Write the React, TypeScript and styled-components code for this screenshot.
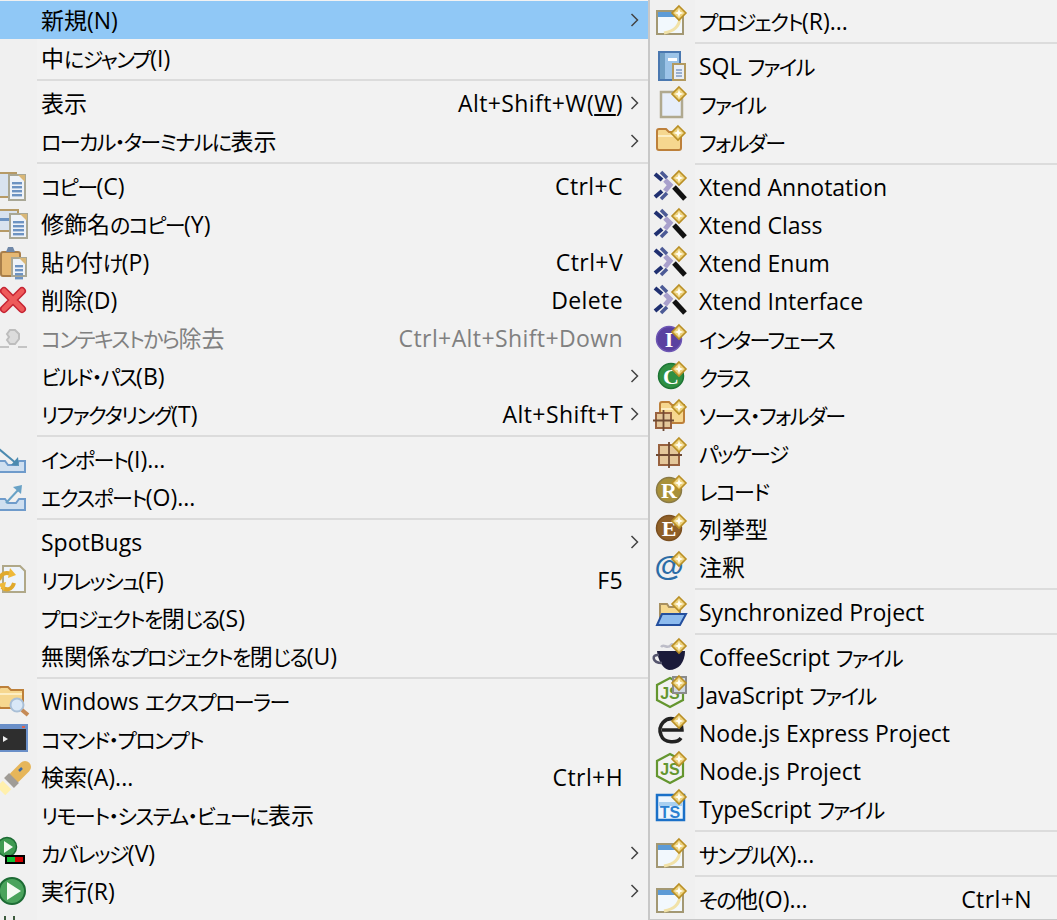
import React from "react";
import styled, { createGlobalStyle } from "styled-components";

const GlobalStyle = createGlobalStyle`
  html, body {
    margin: 0;
    padding: 0;
    background: #f2f2f2;
  }
`;

const Page = styled.div`
  width: 1057px;
  height: 920px;
  display: flex;
  overflow: hidden;
  color: #000;
  font-family: "Open Sans", "Noto Sans CJK JP", sans-serif;
  font-size: 23px;
  font-feature-settings: "palt";
`;

const Menu = styled.ul<{ $gutter: number; $top: number }>`
  list-style: none;
  margin: 0;
  padding: ${(p) => p.$top}px 0 0;
  background: linear-gradient(
    to right,
    #f0f0f0 ${(p) => p.$gutter}px,
    #f2f2f2 ${(p) => p.$gutter}px
  );
`;

const MainMenu = styled(Menu)`
  width: 650px;
  margin-left: -2px;
  flex-shrink: 0;
`;

const SubMenu = styled(Menu)`
  flex: 1;
  height: 920px;
  box-sizing: border-box;
  border-left: 2px solid #c8c8c8;
  border-bottom: 1px solid #c8c8c8;
`;

const Row = styled.li<{ $selected?: boolean; $disabled?: boolean }>`
  display: flex;
  align-items: center;
  height: 38px;
  line-height: 38px;
  white-space: nowrap;
  background: ${(p) => (p.$selected ? "#90c8f6" : "transparent")};
  color: ${(p) => (p.$disabled ? "#808080" : "#000")};
`;

const Gutter = styled.span<{ $width: number; $inset: number }>`
  width: ${(p) => p.$width}px;
  height: 30px;
  padding-left: ${(p) => p.$inset}px;
  box-sizing: border-box;
  flex-shrink: 0;
  display: flex;
  align-items: center;
`;

const Label = styled.span`
  flex: 1;
  height: 38px;
  padding-left: 4px;
`;

// かなは漢字より細く詰まって見えるので別に指定する
const Kana = styled.span`
  font-size: 21px;
  letter-spacing: -1.6px;
`;

const Shortcut = styled.span<{ $disabled?: boolean }>`
  height: 38px;
  letter-spacing: 0.4px;
  color: ${(p) => (p.$disabled ? "#808080" : "#000")};
`;

const ArrowCell = styled.span`
  width: 25px;
  flex-shrink: 0;
  display: flex;
  align-items: center;
  padding-left: 7px;
  box-sizing: border-box;
`;

const Separator = styled.li<{ $gutter: number }>`
  height: 7px;
  box-sizing: border-box;
  padding-top: 2px;
  margin-left: ${(p) => p.$gutter}px;

  &::before {
    content: "";
    display: block;
    height: 2px;
    background: #dcdcdc;
  }
`;

const Svg = styled.svg`
  width: 30px;
  height: 30px;
  overflow: visible;
  flex-shrink: 0;
`;

const withKana = (text: string) =>
  text.split(/([\u3040-\u30ff]+)/).map((part, i) =>
    /[\u3040-\u30ff]/.test(part) ? <Kana key={i}>{part}</Kana> : part
  );

const Chevron = () => (
  <svg width="9" height="14" viewBox="0 0 9 14">
    <path d="M1.5 1 L7.5 7 L1.5 13" fill="none" stroke="#444" strokeWidth="1.5" />
  </svg>
);

// 新規ウィザードの金色のひし形
const Spark = ({ x = 23, y = 7 }: { x?: number; y?: number }) => (
  <g transform={`translate(${x} ${y})`}>
    <path d="M0 -7 L7 0 L0 7 L-7 0 Z" fill="#ecd17c" stroke="#b98f25" strokeWidth="1.6" />
    <path d="M0 -4.5 L1.2 -1.2 L4.5 0 L1.2 1.2 L0 4.5 L-1.2 1.2 L-4.5 0 L-1.2 -1.2 Z" fill="#fffdf0" />
  </g>
);

const Sheet = ({ x, y, w, h }: { x: number; y: number; w: number; h: number }) => (
  <g>
    <rect x={x} y={y} width={w} height={h} fill="#eef2f8" stroke="#a9a795" strokeWidth="2" />
    <path d={`M${x + w - 7} ${y} h7 v7 Z`} fill="#d9b777" />
    {[7, 11, 15, 19].map((d) => (
      <rect key={d} x={x + 3} y={y + d} width={w - 6} height="2.4" fill="#6d93c2" />
    ))}
  </g>
);

const Round = ({ cx = 13, cy = 14, fill, edge, label }: { cx?: number; cy?: number; fill: string; edge: string; label: string }) => (
  <g>
    <circle cx={cx} cy={cy} r="12.5" fill={fill} stroke={edge} strokeWidth="1.5" />
    <text x={cx} y={cy + 7.5} textAnchor="middle" fontFamily="Liberation Serif, serif" fontWeight="700" fontSize="22" fill="#fff">
      {label}
    </text>
  </g>
);

const WizardWindow = () => (
  <g>
    <rect x="1" y="5" width="26" height="23" fill="#f2f8fd" stroke="#a39873" strokeWidth="2" />
    <rect x="2" y="6" width="24" height="5" fill="#5d9bd6" />
    <path d="M24 12 C23 21 18 25 8 27" fill="none" stroke="#f1e2a8" strokeWidth="3" />
  </g>
);

const FolderShape = ({ y = 0 }: { y?: number }) => (
  <g transform={`translate(0 ${y})`}>
    <path d="M1 4 Q1 2 3 2 H10 L13 5 H25 V21 Q25 23 23 23 H3 Q1 23 1 21 Z" fill="#f6d78f" stroke="#bd803a" strokeWidth="2" />
    <rect x="2" y="8" width="22" height="2" fill="#fdeec4" />
  </g>
);

const XtendMark = () => (
  <g fill="none">
    <path d="M9 8 L14 13 L9 19" stroke="#a8a0cc" strokeWidth="5" />
    <path d="M5 0 L11 6" stroke="#4c5a96" strokeWidth="3.5" />
    <path d="M-1 2 L6 8" stroke="#1f2f70" strokeWidth="4" />
    <path d="M-1 25 L6 19" stroke="#1f2f70" strokeWidth="4" />
    <path d="M5 27 L11 21" stroke="#4c5a96" strokeWidth="3.5" />
    <path d="M18 15 L29 27" stroke="#111" strokeWidth="5" />
    <Spark y={6} />
  </g>
);

const Hexagon = ({ withSheet }: { withSheet?: boolean }) => (
  <g>
    <g transform="translate(0 -3)">
      <path d="M14 1 L27 8 V23 L14 30 L1 23 V8 Z" fill="#f2f2f2" stroke="#64962f" strokeWidth="2.2" />
      <text x="14" y="22" textAnchor="middle" fontFamily="Liberation Sans, sans-serif" fontWeight="700" fontSize="16" fill="#64962f">
        JS
      </text>
    </g>
    {withSheet && <rect x="17" y="-3" width="13" height="16" fill="#cfd8e3" stroke="#8b8b8b" strokeWidth="2" />}
    <Spark x={23} y={3} />
  </g>
);

const PackageMark = ({ x, y, size }: { x: number; y: number; size: number }) => (
  <g transform={`translate(${x} ${y})`}>
    <rect x="0" y="0" width={size} height={size} fill="#e4c79a" stroke="#99623f" strokeWidth="2" />
    <path d={`M${size / 2} -3 V${size + 3} M-3 ${size / 2} H${size + 3}`} stroke="#6f4a33" strokeWidth="1.8" />
  </g>
);

const icons: Record<string, React.ReactNode> = {
  copy: (
    <>
      <rect x="0" y="2" width="18" height="24" fill="#d8e2ef" stroke="#b69a66" strokeWidth="2" />
      <Sheet x={11} y={4} w={16} h={25} />
    </>
  ),
  qualified: (
    <>
      <rect x="0" y="1" width="20" height="21" fill="#d8e2ef" stroke="#b69a66" strokeWidth="2" />
      <rect x="2" y="9" width="14" height="3" fill="#6d93c2" />
      <Sheet x={12} y={5} w={17} h={24} />
    </>
  ),
  paste: (
    <>
      <rect x="3" y="5" width="19" height="24" rx="2" fill="#e6b873" stroke="#a97f4b" strokeWidth="2" />
      <path d="M8 5 L10 0 H15 L17 5 Z" fill="#7088a8" />
      <Sheet x={14} y={11} w={14} h={18} />
    </>
  ),
  delete: (
    <>
      <path d="M6 6 L24 24 M24 6 L6 24" stroke="#c62433" strokeWidth="8" strokeLinecap="round" />
      <path d="M6 6 L24 24 M24 6 L6 24" stroke="#ee5a5a" strokeWidth="5" strokeLinecap="round" />
    </>
  ),
  removeContext: (
    <>
      <path d="M12 7 H17 L21 11 V16 L17 21 H12 L9 17 L11 14 L9 11 Z" fill="#dcdcdc" stroke="#bdbdbd" strokeWidth="2" />
      <path d="M2 24 H11 M20 24 H29" stroke="#c4c4c4" strokeWidth="2" />
    </>
  ),
  import: (
    <>
      <path d="M1 17 H7 L10 21 H18 L21 17 H27 V28 H1 Z" fill="#cfdff0" stroke="#6f9bcb" strokeWidth="2" />
      <path d="M1 5 L19 20" stroke="#4b8ab0" strokeWidth="2" />
      <path d="M21 22 L20 13 L13 21 Z" fill="#4b8ab0" />
    </>
  ),
  export: (
    <>
      <path d="M1 17 H7 L10 21 H18 L21 17 H27 V28 H1 Z" fill="#cfdff0" stroke="#6f9bcb" strokeWidth="2" />
      <path d="M8 21 L22 6" stroke="#69a2c6" strokeWidth="2" />
      <path d="M24 3 L15 5 L23 12 Z" fill="#69a2c6" />
    </>
  ),
  refresh: (
    <>
      <path d="M5 1 H22 L27 6 V27 H5 Z" fill="#eef4fb" stroke="#b0a888" strokeWidth="2" />
      <path d="M1 15 C3 8 8 7 13 9 M16 18 C14 25 8 26 4 22" fill="none" stroke="#e0a92c" strokeWidth="4" />
      <path d="M12 3 L18 10 L10 13 Z M0 19 L8 17 L6 26 Z" fill="#eeb93a" />
    </>
  ),
  explorer: (
    <>
      <FolderShape y={-1} />
      <circle cx="19" cy="19" r="6.5" fill="#d9e8f7" stroke="#a9bfd6" strokeWidth="2" />
      <path d="M24 24 L30 29" stroke="#c58a55" strokeWidth="4" />
    </>
  ),
  cmd: (
    <>
      <rect x="0" y="0" width="30" height="28" fill="#6a8fc8" />
      <rect x="2" y="5" width="26" height="21" fill="#2e2e2e" />
      <path d="M5 12 L10 15 L5 18 Z" fill="#eee" />
      <rect x="24" y="2" width="3" height="2" fill="#e0604a" />
    </>
  ),
  search: (
    <g fill="none">
      <path d="M3 29 L9 23" stroke="#fff0ad" strokeWidth="12" />
      <path d="M17 15 L27 5" stroke="#e6b65a" strokeWidth="12" strokeLinecap="round" />
      <path d="M11 21 L16 16" stroke="#a09c96" strokeWidth="14" />
      <path d="M21 9 L24 6" stroke="#3b6aa8" strokeWidth="2.5" />
    </g>
  ),
  coverage: (
    <>
      <circle cx="9" cy="9" r="9.5" fill="#3f9a52" stroke="#1c6b34" strokeWidth="1.5" />
      <path d="M6 3 L15 9 L6 15 Z" fill="#f4faf2" />
      <rect x="7" y="17" width="20" height="9" fill="#000" />
      <rect x="9" y="19" width="8" height="5" fill="#0fc034" />
      <rect x="17" y="19" width="8" height="5" fill="#d40000" />
    </>
  ),
  run: (
    <>
      <circle cx="14" cy="15" r="13" fill="#4aa35c" stroke="#1c6b34" strokeWidth="2" />
      <path d="M9 6 L23 15 L9 24 Z" fill="#f4faf2" />
    </>
  ),
  debug: <path d="M7 2 V8 M16 2 V8" stroke="#3c5a3c" strokeWidth="2" />,
  project: (
    <>
      <WizardWindow />
      <Spark />
    </>
  ),
  sql: (
    <>
      <rect x="3" y="1" width="21" height="28" fill="#9cc4e8" stroke="#4a78b0" strokeWidth="2" />
      <rect x="4" y="2" width="5" height="26" fill="#6f9fc4" />
      <rect x="12" y="7" width="9" height="3" fill="#fff" />
      <rect x="17" y="13" width="12" height="16" fill="#e8eef6" stroke="#b39a5f" strokeWidth="2" />
      <path d="M20 19 H26 M20 22 H26 M20 25 H26" stroke="#7f9cc2" strokeWidth="1.5" />
    </>
  ),
  file: (
    <>
      <rect x="5" y="3" width="21" height="25" fill="#e7eefa" stroke="#b0a98f" strokeWidth="2.5" />
      <Spark y={5} />
    </>
  ),
  folder: (
    <>
      <FolderShape />
      <Spark x={22} y={6} />
    </>
  ),
  xtend: <XtendMark />,
  interface: (
    <>
      <Round cy={15} fill="#5a41a0" edge="#6e57b4" label="I" />
      <Spark y={8} />
    </>
  ),
  class: (
    <>
      <Round cx={15} fill="#2f8f42" edge="#1d7434" label="C" />
      <Spark />
    </>
  ),
  sourceFolder: (
    <>
      <g transform="translate(3 0)">
        <FolderShape />
      </g>
      <PackageMark x={0} y={13} size={15} />
      <Spark />
    </>
  ),
  package: (
    <>
      <PackageMark x={3} y={7} size={20} />
      <Spark />
    </>
  ),
  record: (
    <>
      <Round fill="#a8913a" edge="#8a7a45" label="R" />
      <Spark />
    </>
  ),
  enum: (
    <>
      <Round fill="#8f5f27" edge="#7a4f20" label="E" />
      <Spark />
    </>
  ),
  annotation: (
    <>
      <text x="13" y="24" textAnchor="middle" fontFamily="Liberation Sans, sans-serif" fontWeight="700" fontSize="30" fill="#2b6ca6">
        @
      </text>
      <Spark />
    </>
  ),
  sync: (
    <>
      <path d="M4 7 H11 L13 10 H24 V26 H4 Z" fill="#f5d88f" stroke="#a89060" strokeWidth="2" />
      <path d="M6 17 H30 L24 28 H1 Z" fill="#8dbbee" stroke="#234f9e" strokeWidth="2" />
      <Spark />
    </>
  ),
  coffee: (
    <>
      <path d="M5 5 C8 1 11 8 15 3 C17 1 18 4 19 6" fill="none" stroke="#bdbdc8" strokeWidth="2.5" />
      <path d="M1 9 H29 C29 20 23 28 13 28 C7 27 2 18 1 9 Z" fill="#1b1b3a" />
      <path d="M3 13 C-5 12 -4 21 6 21" fill="none" stroke="#55556e" strokeWidth="2.5" />
      <Spark y={4} />
    </>
  ),
  jsFile: <Hexagon withSheet />,
  express: (
    <>
      <g transform="translate(0 -4)">
        <path d="M25 24 C22 29 8 30 5 21 C1 11 10 3 18 5 C23 6 26 10 26 16 H6" fill="none" stroke="#222" strokeWidth="3.5" />
      </g>
      <Spark y={3} />
    </>
  ),
  nodeProject: <Hexagon />,
  tsFile: (
    <>
      <rect x="1" y="1" width="27" height="25" fill="#eef6fd" stroke="#1a70c8" strokeWidth="2.5" />
      <rect x="3" y="8" width="23" height="4" fill="#a9d0f0" />
      <text x="14" y="24" textAnchor="middle" fontFamily="Liberation Sans, sans-serif" fontWeight="700" fontSize="16" fill="#2a7fd0">
        TS
      </text>
      <Spark y={3} />
    </>
  ),
};

type Item =
  | "sep"
  | {
      label: string;
      icon?: string;
      shortcut?: React.ReactNode;
      arrow?: boolean;
      selected?: boolean;
      disabled?: boolean;
    };

const mainItems: Item[] = [
  { label: "新規(N)", arrow: true, selected: true },
  { label: "中にジャンプ(I)" },
  "sep",
  { label: "表示", arrow: true, shortcut: <>Alt+Shift+W(<u>W</u>)</> },
  { label: "ローカル・ターミナルに表示", arrow: true },
  "sep",
  { label: "コピー(C)", icon: "copy", shortcut: "Ctrl+C" },
  { label: "修飾名のコピー(Y)", icon: "qualified" },
  { label: "貼り付け(P)", icon: "paste", shortcut: "Ctrl+V" },
  { label: "削除(D)", icon: "delete", shortcut: "Delete" },
  { label: "コンテキストから除去", icon: "removeContext", shortcut: "Ctrl+Alt+Shift+Down", disabled: true },
  { label: "ビルド・パス(B)", arrow: true },
  { label: "リファクタリング(T)", arrow: true, shortcut: "Alt+Shift+T" },
  "sep",
  { label: "インポート(I)...", icon: "import" },
  { label: "エクスポート(O)...", icon: "export" },
  "sep",
  { label: "SpotBugs", arrow: true },
  { label: "リフレッシュ(F)", icon: "refresh", shortcut: "F5" },
  { label: "プロジェクトを閉じる(S)" },
  { label: "無関係なプロジェクトを閉じる(U)" },
  "sep",
  { label: "Windows エクスプローラー", icon: "explorer" },
  { label: "コマンド・プロンプト", icon: "cmd" },
  { label: "検索(A)...", icon: "search", shortcut: "Ctrl+H" },
  { label: "リモート・システム・ビューに表示" },
  { label: "カバレッジ(V)", icon: "coverage", arrow: true },
  { label: "実行(R)", icon: "run", arrow: true },
  { label: "デバッグ(D)", icon: "debug", arrow: true },
];

const subItems: Item[] = [
  { label: "プロジェクト(R)...", icon: "project" },
  "sep",
  { label: "SQL ファイル", icon: "sql" },
  { label: "ファイル", icon: "file" },
  { label: "フォルダー", icon: "folder" },
  "sep",
  { label: "Xtend Annotation", icon: "xtend" },
  { label: "Xtend Class", icon: "xtend" },
  { label: "Xtend Enum", icon: "xtend" },
  { label: "Xtend Interface", icon: "xtend" },
  { label: "インターフェース", icon: "interface" },
  { label: "クラス", icon: "class" },
  { label: "ソース・フォルダー", icon: "sourceFolder" },
  { label: "パッケージ", icon: "package" },
  { label: "レコード", icon: "record" },
  { label: "列挙型", icon: "enum" },
  { label: "注釈", icon: "annotation" },
  "sep",
  { label: "Synchronized Project", icon: "sync" },
  "sep",
  { label: "CoffeeScript ファイル", icon: "coffee" },
  { label: "JavaScript ファイル", icon: "jsFile" },
  { label: "Node.js Express Project", icon: "express" },
  { label: "Node.js Project", icon: "nodeProject" },
  { label: "TypeScript ファイル", icon: "tsFile" },
  "sep",
  { label: "サンプル(X)...", icon: "project" },
  "sep",
  { label: "その他(O)...", icon: "project", shortcut: "Ctrl+N" },
];

const MenuRows: React.FC<{ items: Item[]; gutter: number; inset: number }> = ({ items, gutter, inset }) => (
  <>
    {items.map((item, i) =>
      item === "sep" ? (
        <Separator key={i} $gutter={gutter} />
      ) : (
        <Row key={i} $selected={item.selected} $disabled={item.disabled}>
          <Gutter $width={gutter} $inset={inset}>
            {item.icon && <Svg viewBox="0 0 30 30">{icons[item.icon]}</Svg>}
          </Gutter>
          <Label>{withKana(item.label)}</Label>
          {item.shortcut && <Shortcut $disabled={item.disabled}>{item.shortcut}</Shortcut>}
          <ArrowCell>{item.arrow && <Chevron />}</ArrowCell>
        </Row>
      )
    )}
  </>
);

const App: React.FC = () => (
  <Page>
    <GlobalStyle />
    <MainMenu $gutter={39} $top={1}>
      <MenuRows items={mainItems} gutter={39} inset={0} />
    </MainMenu>
    <SubMenu $gutter={45} $top={2}>
      <MenuRows items={subItems} gutter={45} inset={6} />
    </SubMenu>
  </Page>
);

export default App;
